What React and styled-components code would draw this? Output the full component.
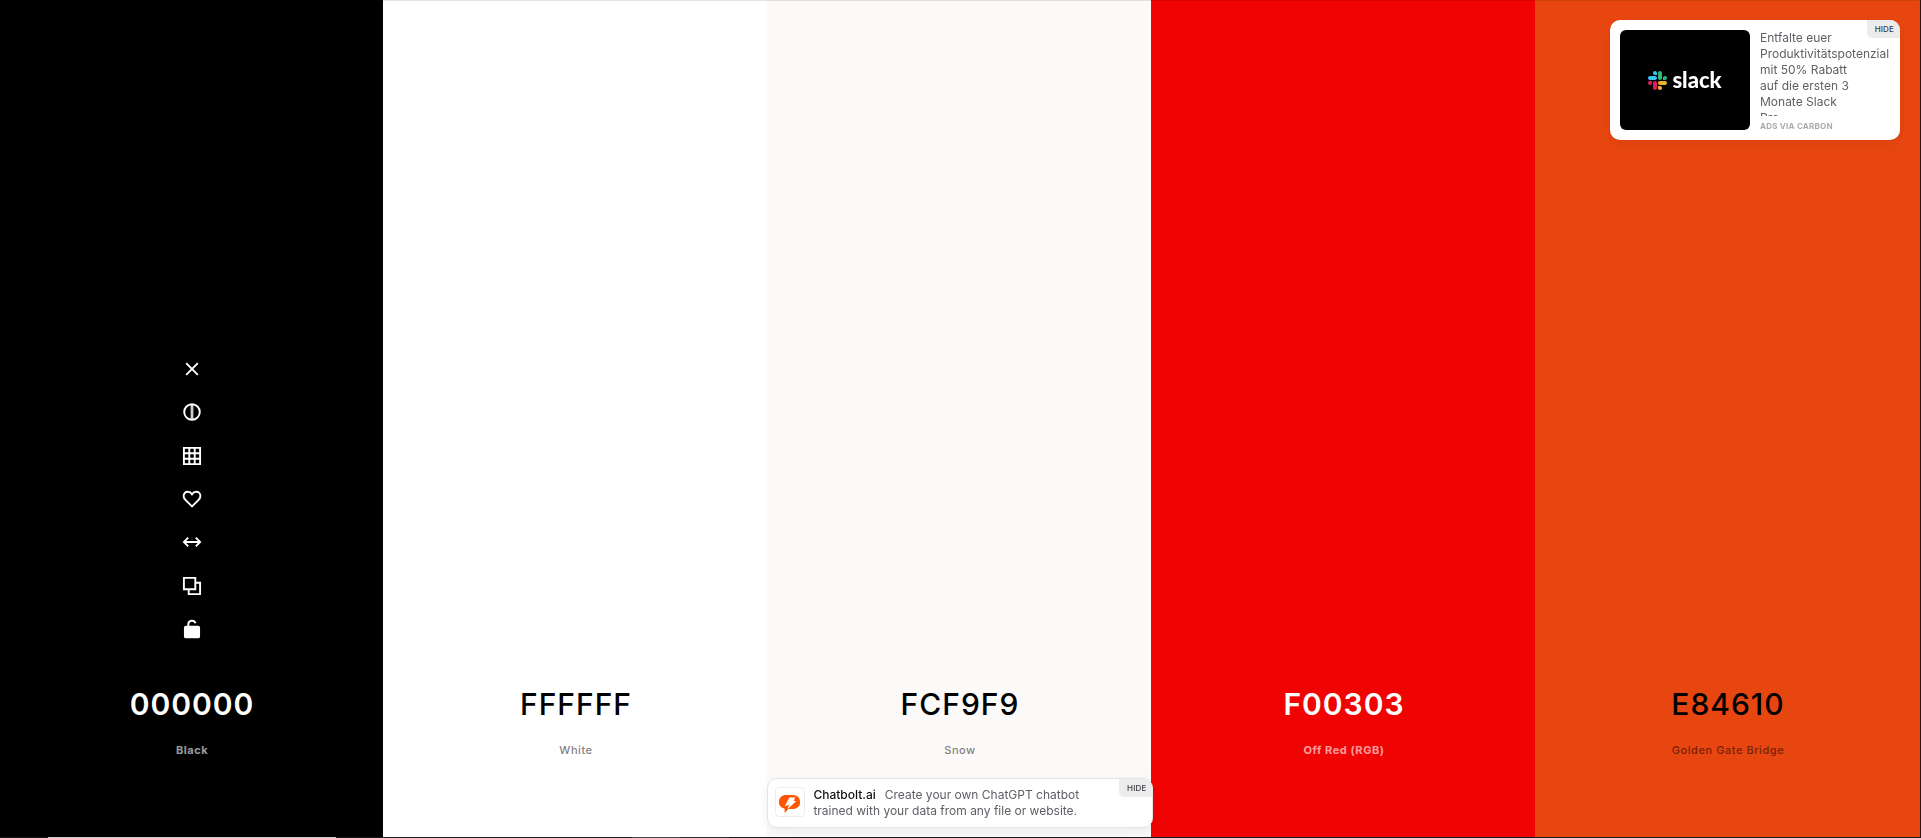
import React from "react";
import styled, { createGlobalStyle } from "styled-components";

const GlobalStyle = createGlobalStyle`
  *, *::before, *::after { box-sizing: border-box; }
  body {
    margin: 0;
    font-family: Inter, "Liberation Sans", sans-serif;
  }
  button { font-family: inherit; }
`;

const Page = styled.div`
  min-height: 100vh;
  display: flex;
  flex-direction: column;
  overflow: hidden;
  background: #e84610;
  border-right: 1px solid #1b1a1c;
`;

const Palette = styled.main`
  flex: 1;
  display: grid;
  grid-template-columns: repeat(5, 1fr);
  margin: 0 1px 0 -1px;
`;

const Swatch = styled.section`
  display: flex;
  flex-direction: column;
  justify-content: flex-end;
  align-items: center;
  padding: 0 0 79px 2px;
  background: ${(p) => p.$fill};
  color: ${(p) => (p.$light ? "#fff" : "#000")};
  box-shadow: inset 0 1px rgba(0, 0, 0, 0.1), 1px 0 ${(p) => p.$fill};
`;

const Tools = styled.div`
  display: grid;
  grid-template-rows: repeat(7, 1fr);
  height: 304px;
  margin-bottom: 33px;
`;

const ToolButton = styled.button`
  display: grid;
  place-items: center;
  width: 44px;
  padding: 0;
  border: 0;
  background: none;
  color: inherit;
  cursor: pointer;
`;

const HexButton = styled.button`
  padding: 0;
  border: 0;
  background: none;
  color: inherit;
  font-size: 30px;
  line-height: 40px;
  font-weight: ${(p) => (p.$light ? 600 : 500)};
  letter-spacing: 1px;
  cursor: pointer;
`;

const ColorName = styled.button`
  margin-top: 18px;
  padding: 0;
  border: 0;
  background: none;
  color: inherit;
  opacity: ${(p) => (p.$light ? 0.6 : 0.5)};
  font-size: 11px;
  line-height: 16px;
  font-weight: ${(p) => (p.$light ? 700 : 500)};
  letter-spacing: 0.05em;
  cursor: pointer;
`;

const BottomEdge = styled.div`
  height: 1px;
  background: linear-gradient(
    90deg,
    #1b1a1c 48px, #cfcaca 48px, #cfcaca 336px, #1b1a1c 336px,
    #1b1a1c 632px, #484648 632px, #484648 680px, #2d2b2d 680px,
    #2d2b2d 729px, #1b1a1c 729px
  );
`;

const AdCard = styled.aside`
  position: fixed;
  display: flex;
  overflow: hidden;
  background: #fff;
  border-radius: 10px;
  color: #5f6066;
  font-size: 12px;
  line-height: 16px;
`;

const CarbonAd = styled(AdCard)`
  top: 20px;
  right: 21px;
  width: 290px;
  height: 120px;
  gap: 10px;
  padding: 10px;
  box-shadow: 0 4px 12px rgba(0, 0, 0, 0.06);
`;

const SlackBanner = styled.a`
  flex: 0 0 130px;
  display: flex;
  align-items: center;
  justify-content: center;
  gap: 5px;
  border-radius: 6px;
  background: #000;
  color: #fff;
  font-family: Lato, sans-serif;
  font-weight: 900;
  font-size: 22px;
  line-height: 22px;
  text-decoration: none;
`;

const CarbonBody = styled.div`
  flex: 1;
  min-width: 0;
  display: flex;
  flex-direction: column;
`;

const CarbonText = styled.a`
  flex: none;
  height: 86px;
  padding-right: 36px;
  overflow: hidden;
  color: inherit;
  text-decoration: none;
`;

const CarbonCredit = styled.a`
  margin-top: 5px;
  color: #aaabaf;
  font-size: 8px;
  line-height: 10px;
  font-weight: 700;
  letter-spacing: 0.03em;
  text-decoration: none;
`;

const SponsorAd = styled(AdCard)`
  bottom: 10px;
  left: calc(40% - 1px);
  width: 386px;
  gap: 8px;
  padding: 8px 8px 8px 7px;
  border: 1px solid #e4e4e4;
  box-shadow: 0 4px 12px rgba(0, 0, 0, 0.06);
`;

const SponsorIcon = styled.span`
  flex: 0 0 30px;
  height: 30px;
  display: grid;
  place-items: center;
  border: 1px solid #ececec;
  border-radius: 4px;
`;

const SponsorText = styled.a`
  width: 280px;
  color: inherit;
  text-decoration: none;
`;

const SponsorName = styled.strong`
  margin-right: 9px;
  color: #111;
  font-weight: 500;
`;

const HideButton = styled.button`
  position: absolute;
  top: 0;
  right: 0;
  padding: 0 6px 0 8px;
  border: 0;
  border-bottom-left-radius: 5px;
  background: #ececec;
  color: #3c3d45;
  font-size: 8px;
  line-height: 18px;
  font-weight: 500;
  letter-spacing: 0.02em;
  cursor: pointer;
`;

const icons = {
  Remove: <path d="M6.200 6.200l11.600 11.600M17.800 6.200L6.200 17.800" />,
  "View shades": (
    <>
      <circle cx="12" cy="12" r="7.8" />
      <path d="M12 4.5v15" strokeWidth="2.8" opacity="0.8" />
    </>
  ),
  "View grid": <path d="M3.9 3.9h16.2v16.2H3.9zM9.3 4v16M14.7 4v16M4 9.3h16M4 14.7h16" />,
  Save: (
    <path d="M12 19.4l-6.1-6C4.3 11.8 3.6 10.700 3.600 8.900c0-2.400 1.800-4.100 4.200-4.100 1.700 0 3.300.9 4.200 2.400.9-1.500 2.500-2.400 4.200-2.400 2.400 0 4.200 1.700 4.200 4.100 0 1.800-.7 2.900-2.300 4.500z" />
  ),
  Drag: <path d="M4.200 12h15.600M8.200 7.700L3.900 12l4.300 4.300M15.800 7.700l4.300 4.300-4.300 4.300" />,
  Copy: <path d="M3.900 3.900h11.400v11.400H3.900zM15.500 8.700h4.600v11.400H8.700v-4.600" />,
  Lock: (
    <>
      <rect x="4.900" y="9.600" width="14.200" height="10.800" rx="1" fill="currentColor" />
      <path d="M8.300 9.600V7.400a3.700 3.700 0 0 1 7.200-1.200" />
    </>
  ),
};

const Icon = ({ name }) => (
  <svg width="24" height="24" viewBox="0 0 24 24" fill="none" stroke="currentColor" strokeWidth="1.9" aria-hidden="true">
    {icons[name]}
  </svg>
);

const SlackMark = () => (
  <svg width="19" height="19" viewBox="0 0 122.800 122.800" aria-hidden="true">
    <path fill="#E01E5A" d="M25.800 77.600c0 7.100-5.800 12.900-12.900 12.900S0 84.700 0 77.600s5.800-12.900 12.900-12.900h12.900zm6.500 0c0-7.100 5.800-12.900 12.900-12.900s12.900 5.800 12.900 12.900v32.300c0 7.100-5.800 12.900-12.900 12.900s-12.900-5.800-12.900-12.900z" />
    <path fill="#36C5F0" d="M45.200 25.800c-7.100 0-12.900-5.800-12.900-12.900S38.100 0 45.200 0s12.900 5.800 12.900 12.900v12.900zm0 6.500c7.100 0 12.900 5.800 12.900 12.900s-5.800 12.900-12.900 12.900H12.900C5.800 58.100 0 52.300 0 45.200s5.800-12.900 12.900-12.900z" />
    <path fill="#2EB67D" d="M97 45.200c0-7.100 5.800-12.900 12.900-12.900s12.900 5.800 12.900 12.900-5.800 12.900-12.900 12.900H97zm-6.500 0c0 7.100-5.800 12.900-12.900 12.900s-12.900-5.800-12.900-12.900V12.900C64.700 5.800 70.500 0 77.600 0s12.900 5.800 12.900 12.900z" />
    <path fill="#ECB22E" d="M77.600 97c7.100 0 12.900 5.800 12.900 12.900s-5.800 12.900-12.900 12.900-12.900-5.800-12.900-12.900V97zm0-6.500c-7.100 0-12.900-5.800-12.900-12.900s5.800-12.900 12.900-12.900h32.300c7.100 0 12.900 5.800 12.900 12.900s-5.800 12.900-12.900 12.900z" />
  </svg>
);

const BoltMark = () => (
  <svg width="22" height="22" viewBox="0 0 22 22" aria-hidden="true">
    <path fill="#ff5500" d="M7.800 4h6.400a6.900 6.900 0 0 1 0 14H9.400l-3.900 4 .2-4.300A6.900 6.900 0 0 1 7.800 4z" />
    <path fill="#fff" d="M10.300 6.400h5.900l-1.400 3.500h2.500l-8.700 8.400 1.500-4.600-4.300 1.500z" />
  </svg>
);

const swatches = [
  { hex: "000000", name: "Black", light: true, active: true },
  { hex: "FFFFFF", name: "White" },
  { hex: "FCF9F9", name: "Snow", fill: "#fcfaf8" },
  { hex: "F00303", name: "Off Red (RGB)", light: true },
  { hex: "E84610", name: "Golden Gate Bridge" },
];

export default function App() {
  return (
    <Page>
      <GlobalStyle />
      <Palette>
        {swatches.map(({ hex, name, light, active, fill }) => (
          <Swatch key={hex} $fill={fill || `#${hex}`} $light={light}>
            {active && (
              <Tools>
                {Object.keys(icons).map((tool) => (
                  <ToolButton key={tool} aria-label={tool}>
                    <Icon name={tool} />
                  </ToolButton>
                ))}
              </Tools>
            )}
            <HexButton $light={light}>{hex}</HexButton>
            <ColorName $light={light}>{name}</ColorName>
          </Swatch>
        ))}
      </Palette>
      <BottomEdge />

      <CarbonAd>
        <SlackBanner href="#slack">
          <SlackMark />
          slack
        </SlackBanner>
        <CarbonBody>
          <CarbonText href="#slack">
            Entfalte euer Produktivitätspotenzial mit 50% Rabatt auf die ersten 3 Monate Slack Pro.
          </CarbonText>
          <CarbonCredit href="#carbon">ADS VIA CARBON</CarbonCredit>
        </CarbonBody>
        <HideButton>HIDE</HideButton>
      </CarbonAd>

      <SponsorAd>
        <SponsorIcon>
          <BoltMark />
        </SponsorIcon>
        <SponsorText href="#chatbolt">
          <SponsorName>Chatbolt.ai</SponsorName>
          Create your own ChatGPT chatbot trained with your data from any file or website.
        </SponsorText>
        <HideButton>HIDE</HideButton>
      </SponsorAd>
    </Page>
  );
}
